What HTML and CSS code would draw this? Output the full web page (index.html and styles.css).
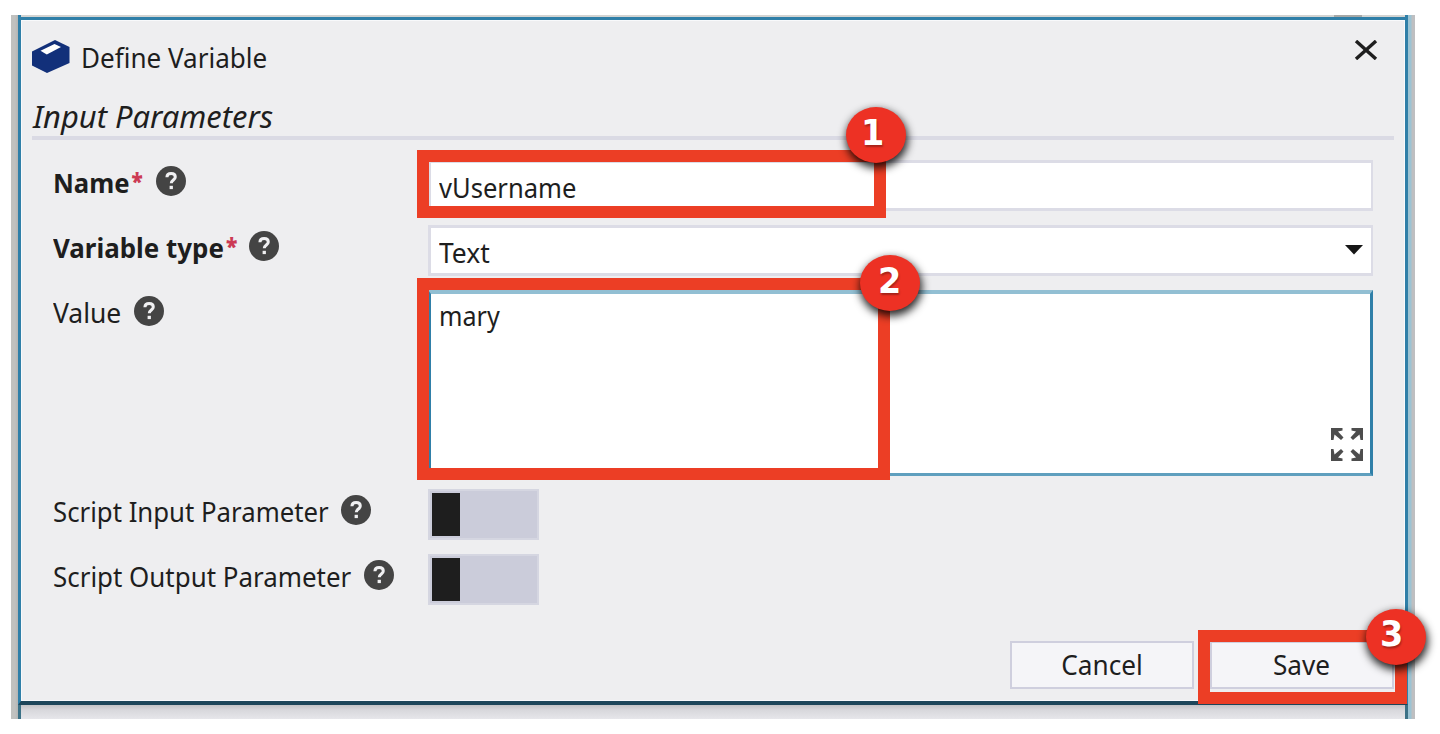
FILE: index.html
```html
<!DOCTYPE html>
<html lang="en">
<head>
<meta charset="utf-8">
<title>Define Variable</title>
<link rel="stylesheet" href="styles.css">
</head>
<body>
<svg class="defs" width="0" height="0" aria-hidden="true">
  <symbol id="help" viewBox="0 0 30 30">
    <circle cx="15" cy="15" r="15" fill="#444"/>
    <path d="M10.9 11.2C11 8.9 12.7 7.6 15.1 7.6c2.500 0 4.200 1.300 4.200 3.400 0 3.100-4 3-4 6.300" fill="none" stroke="#f0f0f2" stroke-width="3"/>
    <rect x="13.600" y="19.800" width="3.300" height="3.300" fill="#f0f0f2"/>
  </symbol>
</svg>
<div class="frame">
  <div class="backdrop-top"><i></i></div>
  <main class="dialog">
    <header class="titlebar">
      <svg class="logo" width="38" height="34" viewBox="0 0 38 34">
        <path d="M0 11.500 23 0l14.500 7v16L15 33 0 25.500Z" fill="#12307a"/>
        <path d="M8.500 10.800 22.500 4l6.500 3L14.800 14.600Z" fill="#fff"/>
      </svg>
      <h1 class="title">Define Variable</h1>
      <svg class="close" width="24" height="20" viewBox="0 0 24 20">
        <path d="M2 1 22 19M22 1 2 19" stroke="#1e1e1e" stroke-width="3.400" fill="none"/>
      </svg>
    </header>
    <h2 class="section"><span>Input Parameters</span></h2>
    <form class="form">
      <div class="row">
        <div class="label bold"><span class="t t-name">Name<b class="req">*</b></span><svg class="help"><use href="#help"/></svg></div>
        <div class="field"><span class="v v-name">vUsername</span></div>
      </div>
      <div class="row">
        <div class="label bold"><span class="t t-type">Variable type<b class="req">*</b></span><svg class="help"><use href="#help"/></svg></div>
        <div class="field"><span class="v v-text">Text</span>
          <svg class="caret" width="18" height="10" viewBox="0 0 18 10"><path d="M0 0h18L9 9.500Z" fill="#161616"/></svg>
        </div>
      </div>
      <div class="row tall">
        <div class="label"><span class="t t-value">Value</span><svg class="help"><use href="#help"/></svg></div>
        <div class="field area"><span class="v v-mary">mary</span>
          <svg class="expand" width="32" height="33" viewBox="0 0 32 33">
            <g fill="#4d4d4d">
              <path d="M0 0H11.500V2.500L7 3.500 12.500 9.500 10 12 3.500 6.500 2.500 12H0Z"/>
              <path d="M32 0H20.500V2.500L25 3.500 19.500 9.500 22 12 28.500 6.500 29.500 12H32Z"/>
              <path d="M0 33H11.500V30.500L7 29.500 12.500 23.500 10 21 3.500 26.500 2.500 21H0Z"/>
              <path d="M32 33H20.500V30.500L25 29.500 19.500 23.500 22 21 28.500 26.500 29.500 21H32Z"/>
            </g>
          </svg>
        </div>
      </div>
      <div class="row">
        <div class="label"><span class="t t-in">Script Input Parameter</span><svg class="help"><use href="#help"/></svg></div>
        <div class="toggle"><i></i></div>
      </div>
      <div class="row">
        <div class="label"><span class="t t-out">Script Output Parameter</span><svg class="help"><use href="#help"/></svg></div>
        <div class="toggle"><i></i></div>
      </div>
    </form>
    <footer class="actions">
      <div class="btn"><span class="b-cancel">Cancel</span></div>
      <div class="btn save"><span class="b-save">Save</span></div>
    </footer>
  </main>
  <div class="backdrop-bottom"></div>
</div>
<div class="mark mark-1"></div>
<div class="mark mark-2"></div>
<div class="mark mark-3"></div>
<div class="badge badge-1"><span>1</span></div>
<div class="badge badge-2"><span>2</span></div>
<div class="badge badge-3"><span>3</span></div>
</body>
</html>
```
FILE: styles.css
```css
* { box-sizing: border-box; }
body {
  margin: 0;
  width: 1440px;
  height: 734px;
  overflow: hidden;
  position: relative;
  background: #fff;
  color: #1e1e1e;
  font: 27px/38px "Noto Sans", "Open Sans", sans-serif;
}
.defs { position: absolute; }

/* Window edges around the dialog */
.frame {
  display: flex;
  flex-direction: column;
  width: 1404px;
  height: 704px;
  margin: 15px 0 0 11px;
  padding: 0 7px 0 7px;
  background: linear-gradient(90deg, #c0c1bf 0 4px, #b4b5b4 7px, #b4b5b4 1397px, #9cc3d3 1397px 1400px, #bebfc1 1401px);
}
.backdrop-top { height: 2px; background: #d3d4d2; border: solid #2f7fa8; border-width: 0 3px; }
.backdrop-top i { display: block; width: 28px; height: 2px; margin-left: 1313px; background: #a6a8a6; }
.backdrop-bottom {
  flex: 1;
  border: solid #3b7186;
  border-width: 0 3px;
  background: linear-gradient(#c3c3c6, #d8d8dc 5px, #e6e6ea 14px);
}
.dialog {
  height: 688px;
  border: 3px solid #2f7fa8;
  border-bottom: 4px solid #1d465a;
  background: #eeeef0;
  box-shadow: inset 0 0 0 1px #f8f9fb;
}

.titlebar { display: flex; align-items: flex-start; height: 76px; padding: 20px 27px 0 11px; }
.title {
  flex: 1;
  margin: -1px 0 0 11px;
  font-size: 27px;
  font-weight: 400;
  white-space: nowrap;
  transform: scaleX(.965);
  transform-origin: left;
}
.section {
  width: 1362px;
  height: 44px;
  margin: 0 0 0 11px;
  padding-top: 2px;
  border-bottom: 4px solid #dadae4;
  font-size: 30px;
  font-style: italic;
  font-weight: 400;
}
.section span { display: inline-block; margin-left: 1px; white-space: nowrap; transform: scaleX(1.03); transform-origin: left; }

.form { padding: 20px 31px 0 32px; }
.row { display: grid; grid-template-columns: 375px 945px; height: 51px; margin-bottom: 14px; }
.row.tall { height: 186px; margin-bottom: 13px; }
.label { display: flex; align-items: flex-start; }
.bold { font-weight: 700; }
.t { white-space: nowrap; transform-origin: left; margin-top: 4px; }
.req { margin-left: 2px; color: #cc3a54; font-size: 22px; line-height: 1; vertical-align: 3px; }
.help { width: 30px; height: 30px; margin-top: 6px; flex: none; }
.t-name { width: 103px; transform: scaleX(.95); }
.t-type { width: 196px; transform: scaleX(.96); }
.t-value { width: 81px; transform: scaleX(.98); }
.t-in { width: 288px; transform: scaleX(.954); }
.t-out { width: 311px; transform: scaleX(.96); }

.field {
  display: flex;
  justify-content: space-between;
  border: 3px solid #dcdce6;
  border-right-width: 2px;
  background: #fff;
  padding: 6px 8px 0 8px;
}
.v { white-space: nowrap; transform-origin: left; height: 38px; }
.v-name { transform: scaleX(.947); }
.v-text { transform: scaleX(.98); }
.v-mary { transform: scaleX(.93); }
.caret { margin-top: 11px; }
.area { border: 3px solid #2f7fa8; border-top: 4px solid #92bfd3; border-bottom-color: #5f9fbe; padding-top: 3px; padding-right: 7px; }
.expand { align-self: flex-end; margin-bottom: 12px; }
.toggle { width: 111px; height: 51px; padding: 2px; background: #cbccda; border: 2px solid #d5d6e1; }
.toggle i { display: block; width: 28px; height: 43px; background: #1e1e1e; }

.actions { display: flex; gap: 16px; padding: 22px 0 0 989px; }
.btn {
  width: 184px;
  height: 48px;
  border: 2px solid #cfcfde;
  background: #f5f5f8;
  text-align: center;
  line-height: 44px;
}
.btn span { display: inline-block; transform: scaleX(.97); }
.save { padding-right: 2px; }

/* Numbered callouts over the dialog */
.mark { position: absolute; border: 12px solid #ec3e25; }
.mark-1 { left: 417px; top: 150px; width: 469px; height: 68px; }
.mark-2 { left: 417px; top: 278px; width: 473px; height: 202px; }
.mark-3 { left: 1198px; top: 630px; width: 209px; height: 74px; }
.badge {
  position: absolute;
  width: 60px;
  height: 56px;
  border-radius: 50%;
  background: #ed3124;
  box-shadow: 1px 4px 8px 1px rgba(0, 0, 0, .85);
  color: #fff;
  font: 700 36px/52px "DejaVu Sans", sans-serif;
  text-align: center;
  text-shadow: 1px 2px 2px rgba(0, 0, 0, .3);
}
.badge span { display: inline-block; transform: scaleX(.93); }
.badge-1 { left: 846px; top: 107px; padding-right: 6px; }
.badge-2 { left: 860px; top: 255px; }
.badge-3 { left: 1366px; top: 609px; padding-right: 8px; line-height: 49px; }
```
